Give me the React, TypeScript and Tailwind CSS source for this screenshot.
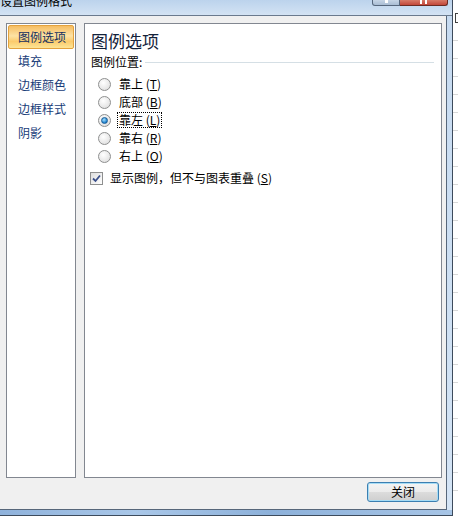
import React from 'react'

const font = "font-['Noto_Sans_CJK_SC','Liberation_Sans',sans-serif]"

const navItems = ['图例选项', '填充', '边框颜色', '边框样式', '阴影']

const positions = [
  { label: '靠上', key: 'T' },
  { label: '底部', key: 'B' },
  { label: '靠左', key: 'L', checked: true },
  { label: '靠右', key: 'R' },
  { label: '右上', key: 'O' },
]

function Radio({ checked }: { checked?: boolean }) {
  return (
    <div className="w-[13px] h-[13px] rounded-full border border-[#8e8f8f] bg-[radial-gradient(circle_at_40%_35%,#ffffff,#d9d9d9)] flex items-center justify-center shrink-0">
      {checked && (
        <div className="w-[7px] h-[7px] rounded-full bg-[radial-gradient(circle_at_40%_35%,#a6e1ff,#1b7fcc_70%,#0c5a9e)] border border-[#1a5d97]" />
      )}
    </div>
  )
}

export default function App() {
  return (
    <div className={`w-[458px] h-[518px] overflow-hidden bg-white flex ${font}`}>
      {/* dialog window */}
      <div className="w-[453px] h-[516px] flex flex-col border-r border-b border-[#3d4b5c] shrink-0">
        {/* title bar */}
        <div className="h-[16px] flex border-b border-[#6a7a8e] bg-[linear-gradient(to_bottom,#bcd3ec,#d3e3f4)] overflow-hidden">
          <div className="text-[12px] leading-[12px] -mt-[5px] text-black">设置图例格式</div>
          <div className="flex-1" />
          <div className="flex mr-[4px]">
            <div className="w-[28px] h-[6px] rounded-bl-[3px] border border-t-0 border-[#56677d] bg-[linear-gradient(to_bottom,#c6d5e6,#a9bdd4)] flex justify-center">
              <div className="w-[3px] h-[3px] bg-white" />
            </div>
            <div className="w-[48px] h-[6px] rounded-br-[3px] border border-t-0 border-l-0 border-[#6b2a22] bg-[linear-gradient(to_bottom,#d77a68,#c2473a)] flex justify-center gap-[3px]">
              <div className="w-[2px] h-[4px] bg-white" />
              <div className="w-[2px] h-[4px] bg-white" />
            </div>
          </div>
        </div>

        <div className="flex-1 flex min-h-0">
          {/* client area */}
          <div className="w-[447px] bg-[#f0f0f0] border-r border-b border-[#56667a] flex flex-col pl-[6px] pr-[4px] pt-[7px]">
            <div className="h-[455px] flex gap-[8px]">
              {/* left nav */}
              <div className="w-[70px] border border-[#828790] bg-white p-[1px] flex flex-col">
                {navItems.map((item, i) =>
                  i === 0 ? (
                    <div
                      key={item}
                      className="h-[24px] pl-[9px] flex items-center text-[12px] text-[#14305f] border border-[#e3a23d] rounded-[2px] bg-[linear-gradient(to_bottom,#f6bd62,#fde2a4_45%,#fbcb6c_70%,#fde596)]"
                    >
                      {item}
                    </div>
                  ) : (
                    <div key={item} className="h-[24px] pl-[10px] flex items-center text-[12px] text-[#173c78]">
                      {item}
                    </div>
                  )
                )}
              </div>

              {/* right content */}
              <div className="w-[358px] border border-[#828790] bg-white pt-[7px] flex flex-col">
                <div className="pl-[6px] h-[20px] text-[17px] leading-[20px] text-[#13223a]">图例选项</div>
                <div className="pl-[6px] mt-[2px] h-[18px] flex items-center">
                  <span className="text-[12px] text-black">图例位置:</span>
                  <div className="flex-1 ml-[3px] mr-[7px] h-px bg-[#d5dfe5]" />
                </div>

                <div className="mt-[4px] flex flex-col">
                  {positions.map((p) => (
                    <div key={p.key} className="h-[18px] pl-[13px] flex items-center gap-[6px]">
                      <Radio checked={p.checked} />
                      <span
                        className={`text-[12px] leading-[14px] text-black px-[1px] ${
                          p.checked ? 'border border-dotted border-black' : 'border border-transparent'
                        }`}
                      >
                        {p.label} (<span className="underline">{p.key}</span>)
                      </span>
                    </div>
                  ))}
                </div>

                <div className="mt-[4px] h-[18px] pl-[5px] flex items-center gap-[7px]">
                  <div className="w-[13px] h-[13px] border border-[#8e8f8f] bg-[linear-gradient(135deg,#dedede,#ffffff)] flex items-center justify-center">
                    <svg width="9" height="9" viewBox="0 0 9 9">
                      <path d="M1 4.5 L3.5 7 L8 1.5" fill="none" stroke="#3b4f8a" strokeWidth="1.8" />
                    </svg>
                  </div>
                  <span className="text-[12px] text-black">
                    显示图例，但不与图表重叠 (<span className="underline">S</span>)
                  </span>
                </div>
              </div>
            </div>

            {/* footer */}
            <div className="flex justify-end mt-[4px] pr-[3px]">
              <button className="w-[72px] h-[20px] rounded-[3px] border border-[#3c7fb1] bg-[linear-gradient(to_bottom,#f4f4f4,#ebebeb_50%,#dcdcdc_51%,#cfcfcf)] shadow-[inset_0_0_0_1px_#a6dcf5] text-[12px] leading-[18px] text-black">
                关闭
              </button>
            </div>
          </div>

          {/* right frame */}
          <div className="flex-1 bg-[linear-gradient(to_bottom,#c6daf0,#d4e4f5)]" />
        </div>

        {/* bottom frame */}
        <div className="h-[5px] bg-[linear-gradient(to_right,#8fb2db,#a9c7e8_30%,#8db1da_60%,#a7c5e6)]" />
      </div>

      {/* background sheet */}
      <div className="flex-1 flex flex-col bg-white">
        <div className="h-[13px]" />
        <div className="h-[10px] w-[3px] ml-[2px] border-l border-t border-b border-[#404040]" />
        {Array.from({ length: 26 }).map((_, i) => (
          <div key={i} className="h-[18px] border-b border-[#d8d8d8]" />
        ))}
      </div>
    </div>
  )
}
